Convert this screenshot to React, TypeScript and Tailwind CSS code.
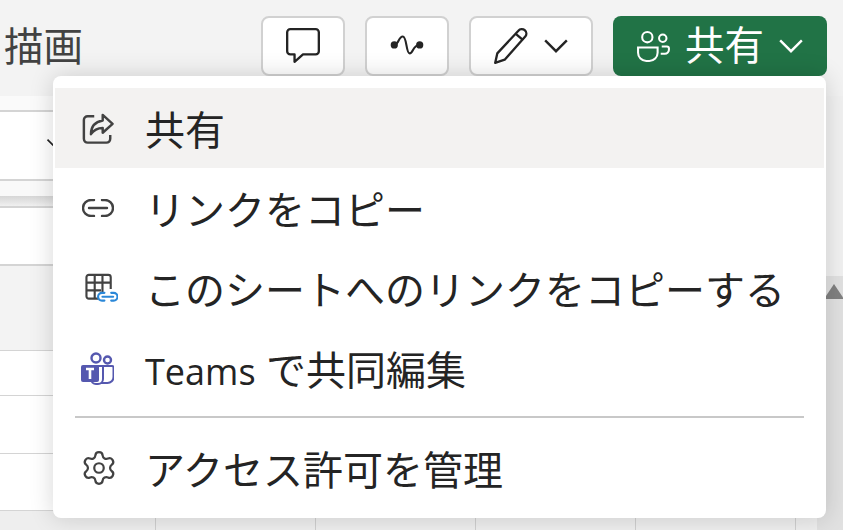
import { Settings } from "lucide-react";

const jp = "font-['Open_Sans','Noto_Sans_CJK_JP',sans-serif]";

function CommentIcon() {
  return (
    <svg width="38" height="38" viewBox="0 0 36 36" fill="none" stroke="#242424" strokeWidth="2.200" strokeLinejoin="round">
      <path d="M6 2h24a3 3 0 0 1 3 3v18a3 3 0 0 1-3 3H18l-8 7v-7H6a3 3 0 0 1-3-3V5a3 3 0 0 1 3-3z" />
    </svg>
  );
}

function WaveIcon() {
  return (
    <svg width="36" height="26" viewBox="0 0 34 24" fill="none" stroke="#242424" strokeWidth="2" strokeLinecap="round">
      <path d="M5 11c4 0 4-8 8-8s3 16 6.500 16 3-8 9-8" />
      <circle cx="5" cy="11" r="3.400" fill="#242424" stroke="none" />
      <circle cx="29" cy="11" r="3.400" fill="#242424" stroke="none" />
    </svg>
  );
}

function PenIcon() {
  return (
    <svg width="36" height="38" viewBox="0 0 34 36" fill="none" stroke="#242424" strokeWidth="2.200" strokeLinejoin="round">
      <path d="M24 3.500a4 4 0 0 1 6.500 5.500L11 31l-9 3 2-9z" />
      <path d="M21.500 6.500l7 6" />
    </svg>
  );
}

function Chevron({ color = "#242424", size = 26 }: { color?: string; size?: number }) {
  return (
    <svg width={size} height={size * 0.6} viewBox="0 0 24 14" fill="none" stroke={color} strokeWidth="2.200">
      <path d="M2 2l10 10L22 2" />
    </svg>
  );
}

function PeopleIcon() {
  return (
    <svg width="35" height="33" viewBox="0 0 34 32" fill="none" stroke="#fff" strokeWidth="2">
      <circle cx="11" cy="7" r="5" />
      <circle cx="26" cy="8" r="3.600" />
      <path d="M2 17h19v5a8 8 0 0 1-8 8h-3a8 8 0 0 1-8-8z" />
      <path d="M25 16h5a2 2 0 0 1 2 2v1a4 4 0 0 1-4 4h-4" />
    </svg>
  );
}

function ShareIcon() {
  return (
    <svg width="32" height="31" viewBox="0 0 34 32" fill="none" stroke="#424242" strokeWidth="2.600" strokeLinejoin="round">
      <path d="M13 3H6a4 4 0 0 0-4 4v20a4 4 0 0 0 4 4h20a4 4 0 0 0 4-4v-4" />
      <path d="M22 1.500L32.500 11 22 20.500v-5c-6 0-9.500 2-12.500 6.500 0-8 4-13 12.500-14.500z" />
    </svg>
  );
}

function LinkIcon() {
  return (
    <svg width="32" height="18" viewBox="0 0 32 18" fill="none" stroke="#424242" strokeWidth="2.400" strokeLinecap="round">
      <path d="M12 1H9a8 8 0 0 0 0 16h3M20 1h3a8 8 0 0 1 0 16h-3M7 9h18" />
    </svg>
  );
}

function SheetLinkIcon() {
  return (
    <svg width="33" height="30" viewBox="0 0 34 30" fill="none" className="ml-[3px]">
      <path d="M14 26H4a2.500 2.500 0 0 1-2.500-2.500V4A2.500 2.500 0 0 1 4 1.500h20A2.500 2.500 0 0 1 26.500 4v12M10 1.500V26M18 1.500V20M1.500 9.500h25M1.500 17.500h15" stroke="#424242" strokeWidth="2.200" />
      <path d="M20 20h-2.500a4 4 0 0 0 0 8H20M27 20h2.500a4 4 0 0 1 0 8H27M18 24h11" stroke="#2b88d8" strokeWidth="2.200" strokeLinecap="round" />
    </svg>
  );
}

function TeamsIcon() {
  return (
    <svg width="34" height="34" viewBox="0 0 34 34" className="-ml-[2px]">
      <circle cx="16" cy="7" r="4.500" fill="none" stroke="#5558af" strokeWidth="2.400" />
      <circle cx="27.500" cy="9" r="3.500" fill="none" stroke="#5558af" strokeWidth="2.400" />
      <path d="M21 15h11a1.500 1.500 0 0 1 1.500 1.500V26a6 6 0 0 1-6 6H21z" fill="#fff" stroke="#5558af" strokeWidth="2" />
      <path d="M11 15h12v13a5 5 0 0 1-5 5h-2a5 5 0 0 1-5-5z" fill="#fff" stroke="#5558af" strokeWidth="2" />
      <rect x="1" y="14" width="18" height="17" rx="2" fill="#5558af" />
      <path d="M6 18h8M10 18v10" stroke="#fff" strokeWidth="2.600" />
    </svg>
  );
}

const items = [
  { key: "share", label: "共有", icon: <ShareIcon />, active: true },
  { key: "link", label: "リンクをコピー", icon: <LinkIcon /> },
  { key: "sheet", label: "このシートへのリンクをコピーする", icon: <SheetLinkIcon /> },
  {
    key: "teams",
    label: (
      <>
        <span className="text-[36px]">Teams</span> で共同編集
      </>
    ),
    icon: <TeamsIcon />,
  },
];

function MenuItem({ label, icon, active }: { label: React.ReactNode; icon: React.ReactNode; active?: boolean }) {
  return (
    <div className={`flex h-[80px] items-center ${active ? "bg-[#f3f2f1]" : ""}`}>
      <div className="flex w-[90px] shrink-0 justify-start pl-[27px]">{icon}</div>
      <span className="pt-[4px] text-[40px] leading-none text-[#242424] whitespace-nowrap">{label}</span>
    </div>
  );
}

function Row({ h, bg = "bg-white" }: { h: string; bg?: string }) {
  return <div className={`${h} ${bg} border-b border-[#d4d4d4]`} />;
}

export default function App() {
  return (
    <div className={`relative flex h-[530px] w-[843px] flex-col overflow-hidden bg-[#f3f3f3] ${jp}`}>
      <header className="flex h-[96px] shrink-0 pt-[16px]">
        <div className="w-[261px] pl-[4px] pt-[8px] text-[39.500px] leading-[44px] text-[#424242]">描画</div>
        <div className="flex h-[60px] gap-[20px]">
          <button className="flex w-[84px] items-center justify-center rounded-[8px] border-2 border-[#d1d1d1] bg-white"><CommentIcon /></button>
          <button className="flex w-[84px] items-center justify-center rounded-[8px] border-2 border-[#d1d1d1] bg-white"><WaveIcon /></button>
          <button className="flex w-[124px] items-center justify-center gap-[14px] rounded-[8px] border-2 border-[#d1d1d1] bg-white"><PenIcon /><Chevron /></button>
          <button className="flex w-[214px] items-center justify-center gap-[14px] rounded-[8px] bg-[#217346] text-[39.500px] leading-none text-white"><PeopleIcon /><span>共有</span><Chevron color="#fff" /></button>
        </div>
      </header>

      <div className="flex flex-1">
        <div className="flex-1 bg-white">
          <div className="h-[16px] border-b-2 border-[#d4d4d4] bg-[#fafafa]" />
          <div className="relative h-[69px] border-b-2 border-[#d4d4d4] bg-white">
            <div className="absolute left-[46px] top-[26px]"><Chevron size={18} /></div>
          </div>
          <div className="h-[15px] bg-[#f9f9f9]" />
          <div className="h-[10px] bg-gradient-to-b from-[#d6d6d6] to-[#f0f0f0]" />
          <div className="h-[60px] border-y-2 border-[#d4d4d4] bg-white" />
          <Row h="h-[85px]" bg="bg-[#f3f3f3]" />
          <Row h="h-[45px]" />
          <Row h="h-[58px]" />
          <Row h="h-[57px]" />
          <div className="flex h-[20px] bg-[#eeeeee] pl-[155px]">
            <div className="w-[160px] border-l border-[#cfcfcf]" />
            <div className="w-[160px] border-l border-[#cfcfcf]" />
            <div className="w-[160px] border-l border-[#cfcfcf]" />
            <div className="w-[160px] border-l border-[#cfcfcf]" />
            <div className="w-[22px] border-l border-[#cfcfcf]" />
          </div>
        </div>
        <div className="flex w-[26px] flex-col overflow-hidden">
          <div className="h-[180px] shrink-0 bg-[#f1f1f1]" />
          <div className="flex-1 bg-[#e1e1e1] pl-[7px] pt-[8px]">
            <div className="h-0 w-0 border-x-[10px] border-b-[15px] border-x-transparent border-b-[#808080]" />
          </div>
        </div>
      </div>

      <div className="absolute left-[53px] top-[76px] h-[442px] w-[773px] rounded-[8px] bg-white px-[2px] pt-[12px] shadow-[0_0_24px_rgba(0,0,0,0.16)]">
        {items.map((item) => (
          <MenuItem key={item.key} label={item.label} icon={item.icon} active={item.active} />
        ))}
        <div className="mx-[20px] mt-[8px] mb-[10px] h-[2px] bg-[#c8c8c8]" />
        <MenuItem label="アクセス許可を管理" icon={<Settings size={38} strokeWidth={1.400} color="#424242" className="-ml-[2px]" />} />
      </div>
    </div>
  );
}
